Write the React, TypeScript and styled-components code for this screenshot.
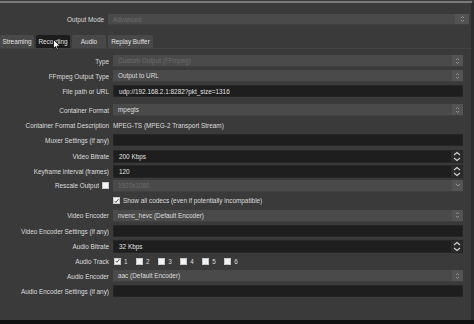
import React from 'react';
import styled, { createGlobalStyle } from 'styled-components';

const GlobalStyle = createGlobalStyle`
  html, body {
    margin: 0;
    padding: 0;
    background: #3a3a3a;
  }
  body {
    font-family: "Liberation Sans", Arial, sans-serif;
  }
`;

const Window = styled.div`
  position: relative;
  width: 474px;
  height: 324px;
  display: flex;
  flex-direction: column;
  overflow: hidden;
  background: #3a3a3a;
  color: #dcdcdc;
  font-size: 6.4px;
`;

const TopLine = styled.div`
  height: 2px;
  margin-top: 1px;
  margin-right: 2px;
  background: #7a7a7a;
`;

const Body = styled.div`
  flex: 1;
  display: flex;
  min-height: 0;
`;

const Main = styled.div`
  width: 471px;
  display: flex;
  flex-direction: column;
`;

const RightEdge = styled.div`
  flex: 1;
  background: #2d2d2d;
`;

const BottomBar = styled.div`
  height: 4px;
  background: #101010;
`;

const ModeRow = styled.div`
  display: grid;
  grid-template-columns: 104px 361px;
  column-gap: 4px;
  align-items: center;
  height: 11px;
  margin-top: 11px;
`;

const Label = styled.div`
  display: flex;
  align-items: center;
  justify-content: flex-end;
  gap: 3px;
  white-space: nowrap;
`;

const TabBar = styled.div`
  display: flex;
  gap: 2px;
  height: 13px;
  margin-top: 10px;
`;

const Tab = styled.div<{ $width: number; $active?: boolean }>`
  width: ${({ $width }) => $width}px;
  display: flex;
  align-items: center;
  justify-content: center;
  border-radius: 2px 2px 0 0;
  background: ${({ $active }) => ($active ? '#1c1c1c' : '#484848')};
  color: #e0e0e0;
  white-space: nowrap;
`;

const Panel = styled.div`
  flex: 1;
  display: flex;
  flex-direction: column;
  gap: 3.1px;
  padding-top: 6px;
  border-top: 1px solid #444;
`;

const Row = styled.div<{ $extra?: number }>`
  display: grid;
  grid-template-columns: 109px 350px;
  column-gap: 4px;
  align-items: center;
  height: 12px;
  margin-top: ${({ $extra }) => $extra ?? 0}px;
`;

const Combo = styled.div<{ $disabled?: boolean }>`
  height: 100%;
  box-sizing: border-box;
  display: flex;
  align-items: center;
  justify-content: space-between;
  padding-left: 5px;
  background: #4a4a4a;
  border-bottom: 1px solid #404040;
  color: ${({ $disabled }) => ($disabled ? '#6c6c6c' : '#dcdcdc')};
`;

const ComboButton = styled.div<{ $width?: number }>`
  width: ${({ $width }) => $width ?? 11}px;
  height: 100%;
  display: flex;
  align-items: center;
  justify-content: center;
  background: #535353;
`;

const Input = styled.div`
  height: 100%;
  box-sizing: border-box;
  display: flex;
  align-items: center;
  justify-content: space-between;
  padding-left: 5px;
  background: #1e1e1e;
  border: 1px solid #262626;
  color: #e2e2e2;
`;

const SpinButton = styled.div`
  width: 11px;
  height: 100%;
  display: flex;
  align-items: center;
  justify-content: center;
  background: #2a2a2a;
`;

const PlainText = styled.div`
  white-space: nowrap;
`;

const CheckRow = styled.div`
  display: flex;
  align-items: center;
  gap: 3px;
  white-space: nowrap;
`;

const TrackList = styled.div`
  display: flex;
  align-items: center;
  gap: 8.5px;
  padding-left: 1px;
`;

const Box = styled.span`
  width: 7px;
  height: 7px;
  box-sizing: border-box;
  display: inline-flex;
  align-items: center;
  justify-content: center;
  background: #f2f2f2;
  border: 1px solid #c8c8c8;
`;

const Cursor = styled.svg`
  position: absolute;
  left: 53px;
  top: 39px;
`;

function UpDown() {
  return (
    <svg width="5" height="8" viewBox="0 0 5 8">
      <path d="M1 3 L2.5 1.5 L4 3 M1 5 L2.5 6.5 L4 5" stroke="#9c9c9c" strokeWidth="0.8" fill="none" />
    </svg>
  );
}

function SpinArrows() {
  return (
    <svg width="8" height="11" viewBox="0 0 8 11">
      <path d="M1 4 L4 1.5 L7 4 M1 7 L4 9.5 L7 7" stroke="#d4d4d4" strokeWidth="1.1" fill="none" />
    </svg>
  );
}

function ChevronDown() {
  return (
    <svg width="6" height="4" viewBox="0 0 6 4">
      <path d="M0.8 0.8 L3 3 L5.2 0.8" stroke="#9a9a9a" strokeWidth="0.9" fill="none" />
    </svg>
  );
}

function CheckBox({ checked }: { checked?: boolean }) {
  return (
    <Box>
      {checked && (
        <svg width="6" height="6" viewBox="0 0 6 6">
          <path d="M0.8 3 L2.3 4.6 L5.4 0.8" stroke="#333" strokeWidth="1" fill="none" />
        </svg>
      )}
    </Box>
  );
}

function ComboField({ value, disabled }: { value: string; disabled?: boolean }) {
  return (
    <Combo $disabled={disabled}>
      <span>{value}</span>
      <ComboButton>
        <UpDown />
      </ComboButton>
    </Combo>
  );
}

function SpinField({ value }: { value: string }) {
  return (
    <Input>
      <span>{value}</span>
      <SpinButton>
        <SpinArrows />
      </SpinButton>
    </Input>
  );
}

const tracks = ['1', '2', '3', '4', '5', '6'];

export default function App() {
  return (
    <>
      <GlobalStyle />
      <Window>
        <TopLine />
        <Body>
          <Main>
            <ModeRow>
              <Label>Output Mode</Label>
              <Combo $disabled>
                <span>Advanced</span>
                <ComboButton $width={14}>
                  <UpDown />
                </ComboButton>
              </Combo>
            </ModeRow>
            <TabBar>
              <Tab $width={34}>Streaming</Tab>
              <Tab $width={34} $active>Recording</Tab>
              <Tab $width={34}>Audio</Tab>
              <Tab $width={45}>Replay Buffer</Tab>
            </TabBar>
            <Panel>
              <Row>
                <Label>Type</Label>
                <ComboField value="Custom Output (FFmpeg)" disabled />
              </Row>
              <Row>
                <Label>FFmpeg Output Type</Label>
                <ComboField value="Output to URL" />
              </Row>
              <Row>
                <Label>File path or URL</Label>
                <Input>udp://192.168.2.1:8282?pkt_size=1316</Input>
              </Row>
              <Row $extra={4}>
                <Label>Container Format</Label>
                <ComboField value="mpegts" />
              </Row>
              <Row>
                <Label>Container Format Description</Label>
                <PlainText>MPEG-TS (MPEG-2 Transport Stream)</PlainText>
              </Row>
              <Row>
                <Label>Muxer Settings (if any)</Label>
                <Input />
              </Row>
              <Row>
                <Label>Video Bitrate</Label>
                <SpinField value="200 Kbps" />
              </Row>
              <Row>
                <Label>Keyframe interval (frames)</Label>
                <SpinField value="120" />
              </Row>
              <Row>
                <Label>
                  Rescale Output <CheckBox />
                </Label>
                <Combo $disabled>
                  <span>1920x1080</span>
                  <ComboButton>
                    <ChevronDown />
                  </ComboButton>
                </Combo>
              </Row>
              <Row>
                <span />
                <CheckRow>
                  <CheckBox checked />
                  Show all codecs (even if potentially incompatible)
                </CheckRow>
              </Row>
              <Row>
                <Label>Video Encoder</Label>
                <ComboField value="nvenc_hevc (Default Encoder)" />
              </Row>
              <Row>
                <Label>Video Encoder Settings (if any)</Label>
                <Input />
              </Row>
              <Row>
                <Label>Audio Bitrate</Label>
                <SpinField value="32 Kbps" />
              </Row>
              <Row>
                <Label>Audio Track</Label>
                <TrackList>
                  {tracks.map((t) => (
                    <CheckRow key={t}>
                      <CheckBox checked={t === '1'} />
                      {t}
                    </CheckRow>
                  ))}
                </TrackList>
              </Row>
              <Row>
                <Label>Audio Encoder</Label>
                <ComboField value="aac (Default Encoder)" />
              </Row>
              <Row>
                <Label>Audio Encoder Settings (if any)</Label>
                <Input />
              </Row>
            </Panel>
          </Main>
          <RightEdge />
        </Body>
        <BottomBar />
        <Cursor width="8" height="12" viewBox="0 0 8 12">
          <path d="M0.5 0.5 L0.5 9.5 L2.6 7.6 L4 11 L5.4 10.4 L4 7.1 L7 7.1 Z" fill="#fff" stroke="#000" strokeWidth="0.8" />
        </Cursor>
      </Window>
    </>
  );
}
